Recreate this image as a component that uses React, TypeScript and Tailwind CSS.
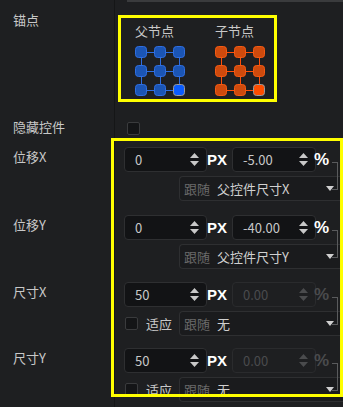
import React from "react";

const FONT = { fontFamily: '"Noto Sans CJK SC", "Noto Sans", sans-serif' };

function Grid({ color }: { color: "blue" | "orange" }) {
  const c =
    color === "blue"
      ? { fill: "#1b55b5", stroke: "#2f6ee0", line: "#2f6ee0", sel: "#0a5cff" }
      : { fill: "#cf4a0d", stroke: "#f55a12", line: "#ff4f0a", sel: "#ff4d00" };
  const pos = [0, 19, 38];
  return (
    <svg width="50" height="50" viewBox="0 0 50 50" className="block">
      {pos.map((p) => (
        <g key={p}>
          <line x1="6" y1={p + 6.5} x2="44" y2={p + 6.5} stroke={c.line} strokeWidth="1" />
          <line x1={p + 6.5} y1="6" x2={p + 6.5} y2="44" stroke={c.line} strokeWidth="1" />
        </g>
      ))}
      {pos.map((y) =>
        pos.map((x) => {
          const sel = x === 38 && y === 38;
          return (
            <rect
              key={`${x}-${y}`}
              x={x + 0.5}
              y={y + 0.5}
              width="11"
              height="11"
              rx="3"
              fill={sel ? c.sel : c.fill}
              stroke={sel ? "#9a9a9a" : c.stroke}
              strokeWidth="1"
            />
          );
        })
      )}
    </svg>
  );
}

function Spinner({ disabled }: { disabled?: boolean }) {
  const col = disabled ? "#4a4b4d" : "#c8c8c8";
  return (
    <svg width="9" height="13" viewBox="0 0 9 13" className="block">
      <polygon points="4.5,0 9,5 0,5" fill={col} />
      <polygon points="0,8 9,8 4.5,13" fill={col} />
    </svg>
  );
}

function NumInput({ value, w, disabled }: { value: string; w: string; disabled?: boolean }) {
  return (
    <div
      className={`${w} h-[25px] rounded-[4px] border flex items-center pl-[10px] pr-[7px] ${
        disabled ? "bg-[#1e1f21] border-[#2a2b2d] text-[#4a4b4d]" : "bg-[#121315] border-[#2e2f31] text-[#c8c8c8]"
      }`}
    >
      <span className="flex-1 text-[13px] leading-none">{value}</span>
      <Spinner disabled={disabled} />
    </div>
  );
}

function Dropdown({ value }: { value: string }) {
  return (
    <div className="flex-1 h-[25px] rounded-l-[4px] border border-r-0 border-[#2e2f31] bg-[#1a1b1d] flex items-center pl-[4px] pr-[9px]">
      <span className="text-[13px] text-[#6a6a6a]">跟随</span>
      <span className="ml-[7px] flex-1 text-[13px] text-[#d0d0d0]">{value}</span>
      <svg width="8" height="5" viewBox="0 0 8 5" className="block">
        <polygon points="0,0 8,0 4,5" fill="#d0d0d0" />
      </svg>
    </div>
  );
}

function Checkbox() {
  return <div className="w-[13px] h-[13px] rounded-[2px] border border-[#3a3b3d] bg-[#141517]" />;
}

function ValueRow({
  label,
  px,
  pct,
  disabled,
  follow,
  fit,
  h,
}: {
  label: string;
  px: string;
  pct: string;
  disabled?: boolean;
  follow: string;
  fit?: boolean;
  h: string;
}) {
  return (
    <div className={`flex ${h}`}>
      <div className="w-[115px] shrink-0 border-r border-[#151617] pl-[13px] pt-[7px] text-[13px] leading-[18px] text-[#c8c8c8]">
        {label}
      </div>
      <div className="flex-1 relative pt-[6px] pl-[9px]">
        <div className="flex items-center">
          <NumInput value={px} w="w-[83px]" />
          <span
            className="w-[25px] text-[15px] font-bold text-white leading-none"
            style={{ fontFamily: '"Liberation Sans", sans-serif' }}
          >
            PX
          </span>
          <NumInput value={pct} w="w-[84px]" disabled={disabled} />
          <span
            className={`-ml-[2px] text-[17px] font-bold leading-none ${disabled ? "text-[#4a4b4d]" : "text-white"}`}
            style={{ fontFamily: '"Liberation Sans", sans-serif' }}
          >
            %
          </span>
        </div>
        <div className="flex items-center mt-[4px]">
          {fit ? (
            <div className="w-[55px] flex items-center pl-[1px]">
              <Checkbox />
              <span className="ml-[8px] text-[13px] text-[#c8c8c8]">适应</span>
            </div>
          ) : (
            <div className="w-[55px]" />
          )}
          <Dropdown value={follow} />
        </div>
        <div className="absolute left-[217px] top-[21px] w-[6px] h-[28px] border-t border-r border-b border-[#5a5b5d]" />
      </div>
    </div>
  );
}

export default function App() {
  return (
    <div className="w-[343px] h-[407px] bg-[#1e1f21] relative overflow-hidden" style={FONT}>
      <div className="flex h-[2px]">
        <div className="w-[115px] shrink-0 border-r border-[#151617]" />
        <div className="ml-[12px] flex-1 bg-[#3a3b3d]" />
      </div>
      <div className="flex h-[111px]">
        <div className="w-[115px] shrink-0 border-r border-[#151617] pl-[13px] pt-[9px] text-[13px] leading-[18px] text-[#c8c8c8]">
          锚点
        </div>
        <div className="flex-1 pl-[3px] pt-[13px]">
          <div className="w-[159px] h-[87px] border-[3px] border-[#ffff00] pl-[14px] pt-[4px] flex gap-[30px]">
            <div className="flex flex-col">
              <span className="text-[13px] leading-[18px] text-[#c8c8c8]">父节点</span>
              <div className="mt-[6px]">
                <Grid color="blue" />
              </div>
            </div>
            <div className="flex flex-col">
              <span className="text-[13px] leading-[18px] text-[#c8c8c8]">子节点</span>
              <div className="mt-[6px]">
                <Grid color="orange" />
              </div>
            </div>
          </div>
        </div>
      </div>
      <div className="flex h-[28px]">
        <div className="w-[115px] shrink-0 border-r border-[#151617] pl-[13px] pt-[5px] text-[13px] leading-[18px] text-[#c8c8c8]">
          隐藏控件
        </div>
        <div className="flex-1 pl-[12px] pt-[9px]">
          <Checkbox />
        </div>
      </div>
      <ValueRow label="位移X" px="0" pct="-5.00" follow="父控件尺寸X" h="h-[68px]" />
      <ValueRow label="位移Y" px="0" pct="-40.00" follow="父控件尺寸Y" h="h-[67px]" />
      <ValueRow label="尺寸X" px="50" pct="0.00" disabled fit follow="无" h="h-[66px]" />
      <ValueRow label="尺寸Y" px="50" pct="0.00" disabled fit follow="无" h="h-[65px]" />
      <div className="absolute left-[111px] top-[138px] w-[232px] h-[259px] border-[3px] border-[#ffff00] pointer-events-none" />
    </div>
  );
}
